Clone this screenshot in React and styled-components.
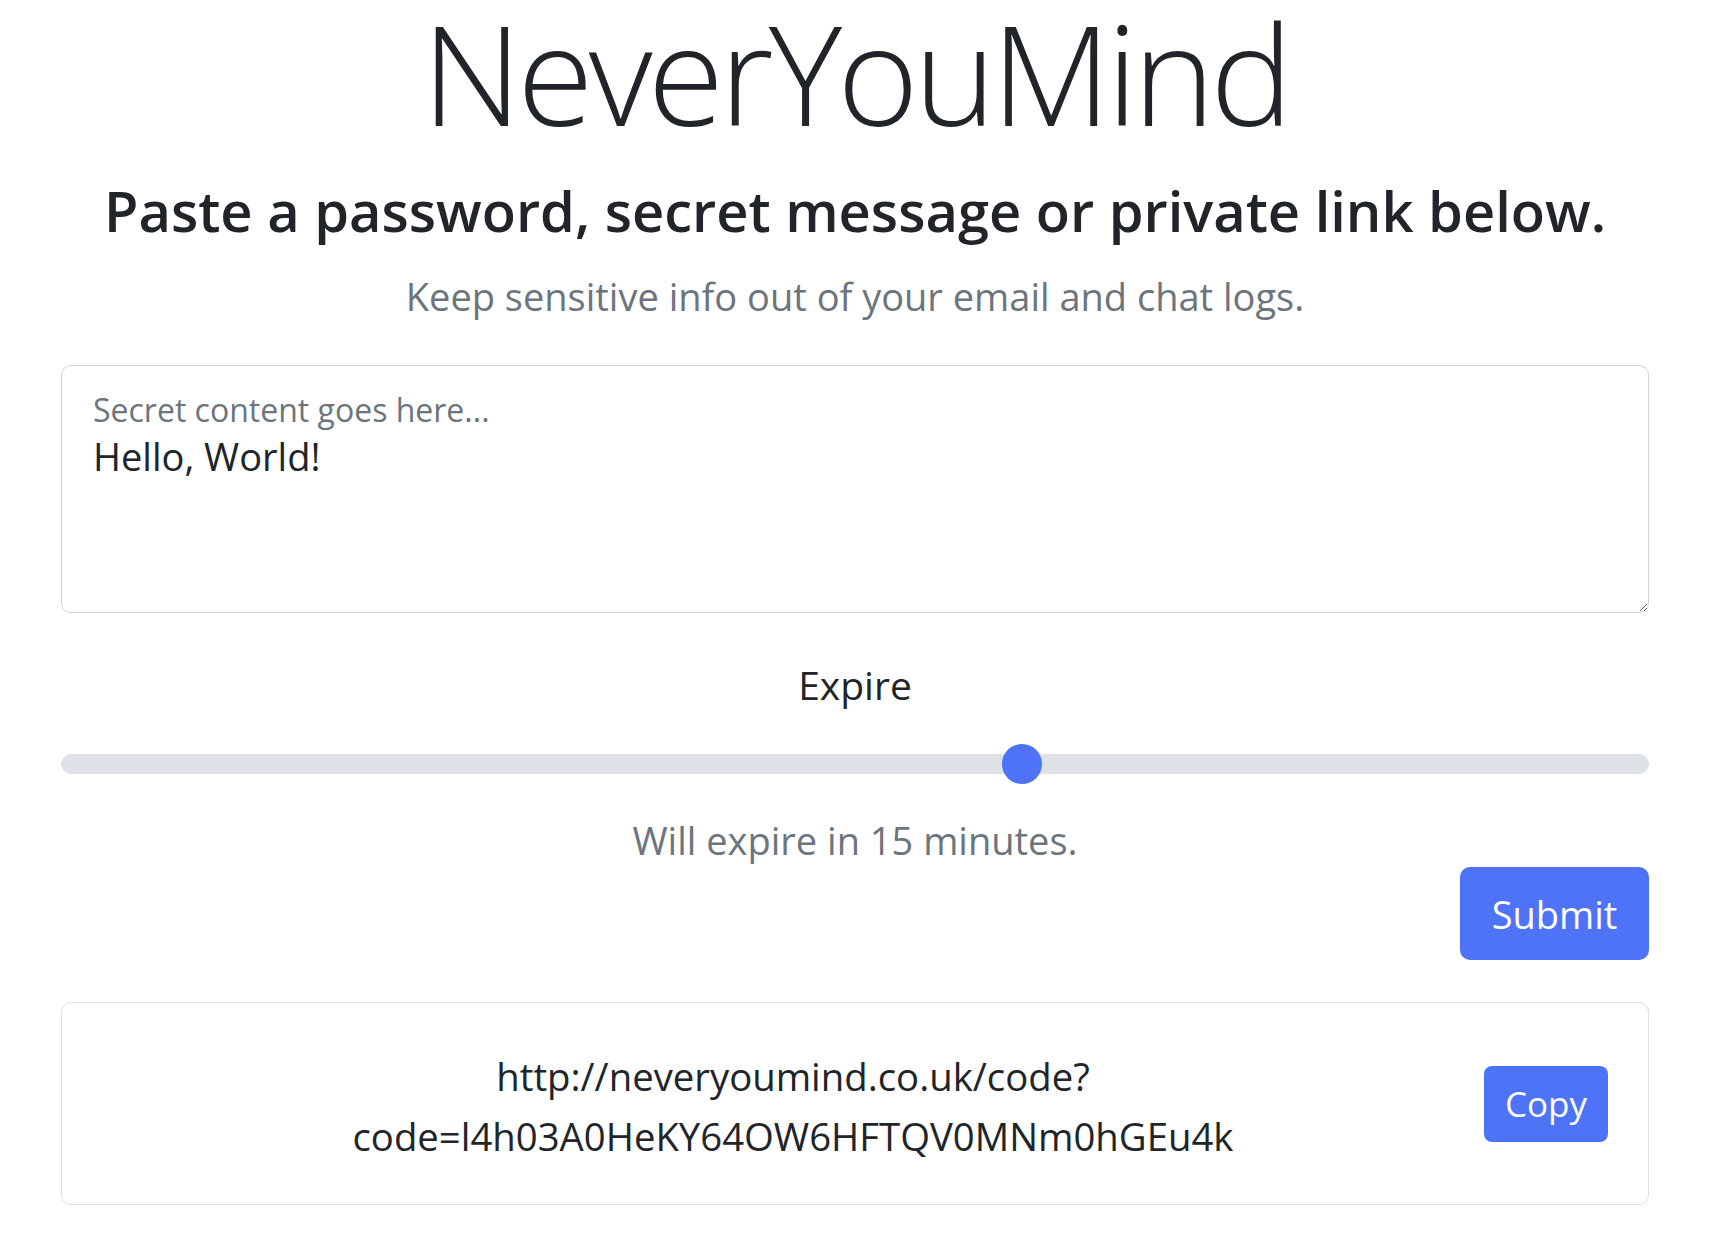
import React, { useState } from 'react';
import styled, { createGlobalStyle } from 'styled-components';

const Global = createGlobalStyle`
  html, body { margin: 0; padding: 0; background: #fff; }
  body {
    font-family: "Open Sans", "Noto Sans", sans-serif;
    color: #212529;
    -webkit-font-smoothing: antialiased;
  }
  * { box-sizing: border-box; }
`;

const Page = styled.main`
  display: flex;
  flex-direction: column;
  padding: 3px 70px 40px 61px;
`;

const Title = styled.h1`
  margin: 0;
  text-align: center;
  font-weight: 300;
  font-size: 139px;
  line-height: 1;
  letter-spacing: -4.8px;
`;

const Heading = styled.h2`
  margin: 35px 0 0;
  text-align: center;
  font-weight: 600;
  font-size: 56px;
  line-height: 1.2;
`;

const Lead = styled.p`
  margin: ${(p) => p.$top}px 0 0;
  text-align: center;
  font-weight: 400;
  font-size: ${(p) => p.$size}px;
  line-height: 1.2;
  color: #6c757d;
`;

const Floating = styled.div`
  position: relative;
  margin-top: 45px;
`;

const SecretInput = styled.textarea`
  display: block;
  width: 100%;
  height: 248px;
  padding: 64px 31px 12px;
  border: 1px solid #ced4da;
  border-radius: 10px;
  font-family: inherit;
  font-size: 38px;
  line-height: 1.4;
  color: #212529;
  resize: vertical;
  outline: none;
`;

const FloatLabel = styled.label`
  position: absolute;
  left: 32px;
  top: 26px;
  font-size: 32px;
  line-height: 1.2;
  color: #6c757d;
  pointer-events: none;
`;

const FieldLabel = styled.label`
  display: block;
  margin-top: 49px;
  text-align: center;
  font-size: 39px;
  line-height: 1.2;
`;

const Range = styled.input`
  -webkit-appearance: none;
  appearance: none;
  display: block;
  width: 100%;
  height: 40px;
  margin: 35px 0 0;
  padding: 0;
  background: transparent;

  &::-webkit-slider-runnable-track {
    height: 20px;
    border-radius: 10px;
    background: #dee2e6;
  }
  &::-webkit-slider-thumb {
    -webkit-appearance: none;
    appearance: none;
    width: 40px;
    height: 40px;
    margin-top: -10px;
    border: 0;
    border-radius: 50%;
    background: #4e73f6;
  }
`;

const Actions = styled.div`
  display: flex;
  justify-content: flex-end;
  margin-top: 4px;
`;

const Button = styled.button`
  border: 0;
  background: #4e73f6;
  color: #fff;
  font-family: inherit;
  font-size: ${(p) => (p.$small ? 35 : 38)}px;
  line-height: 1;
  width: ${(p) => (p.$small ? 124 : 189)}px;
  height: ${(p) => (p.$small ? 76 : 93)}px;
  border-radius: ${(p) => (p.$small ? 8 : 10)}px;
  cursor: pointer;
  flex: none;
`;

const ResultCard = styled.div`
  display: flex;
  align-items: center;
  margin-top: 42px;
  height: 203px;
  padding: 0 40px;
  border: 1px solid #dfdfdf;
  border-radius: 10px;
`;

const Link = styled.div`
  flex: 1;
  text-align: center;
  font-size: 38.3px;
  line-height: 60px;
  padding-top: 4px;
  word-break: break-word;
`;

export default function App() {
  const [text, setText] = useState('Hello, World!');
  const [expire, setExpire] = useState(608);
  return (
    <>
      <Global />
      <Page>
        <Title>NeverYouMind</Title>
        <Heading>Paste a password, secret message or private link below.</Heading>
        <Lead $top={30} $size={38}>Keep sensitive info out of your email and chat logs.</Lead>
        <Floating>
          <SecretInput id="secret" value={text} onChange={(e) => setText(e.target.value)} />
          <FloatLabel htmlFor="secret">Secret content goes here...</FloatLabel>
        </Floating>
        <FieldLabel htmlFor="expire">Expire</FieldLabel>
        <Range
          id="expire"
          type="range"
          min={0}
          max={1000}
          value={expire}
          onChange={(e) => setExpire(Number(e.target.value))}
        />
        <Lead $top={34} $size={38}>Will expire in 15 minutes.</Lead>
        <Actions>
          <Button>Submit</Button>
        </Actions>
        <ResultCard>
          <Link>
            http://neveryoumind.co.uk/code?
            <br />
            code=l4h03A0HeKY64OW6HFTQV0MNm0hGEu4k
          </Link>
          <Button $small>Copy</Button>
        </ResultCard>
      </Page>
    </>
  );
}
